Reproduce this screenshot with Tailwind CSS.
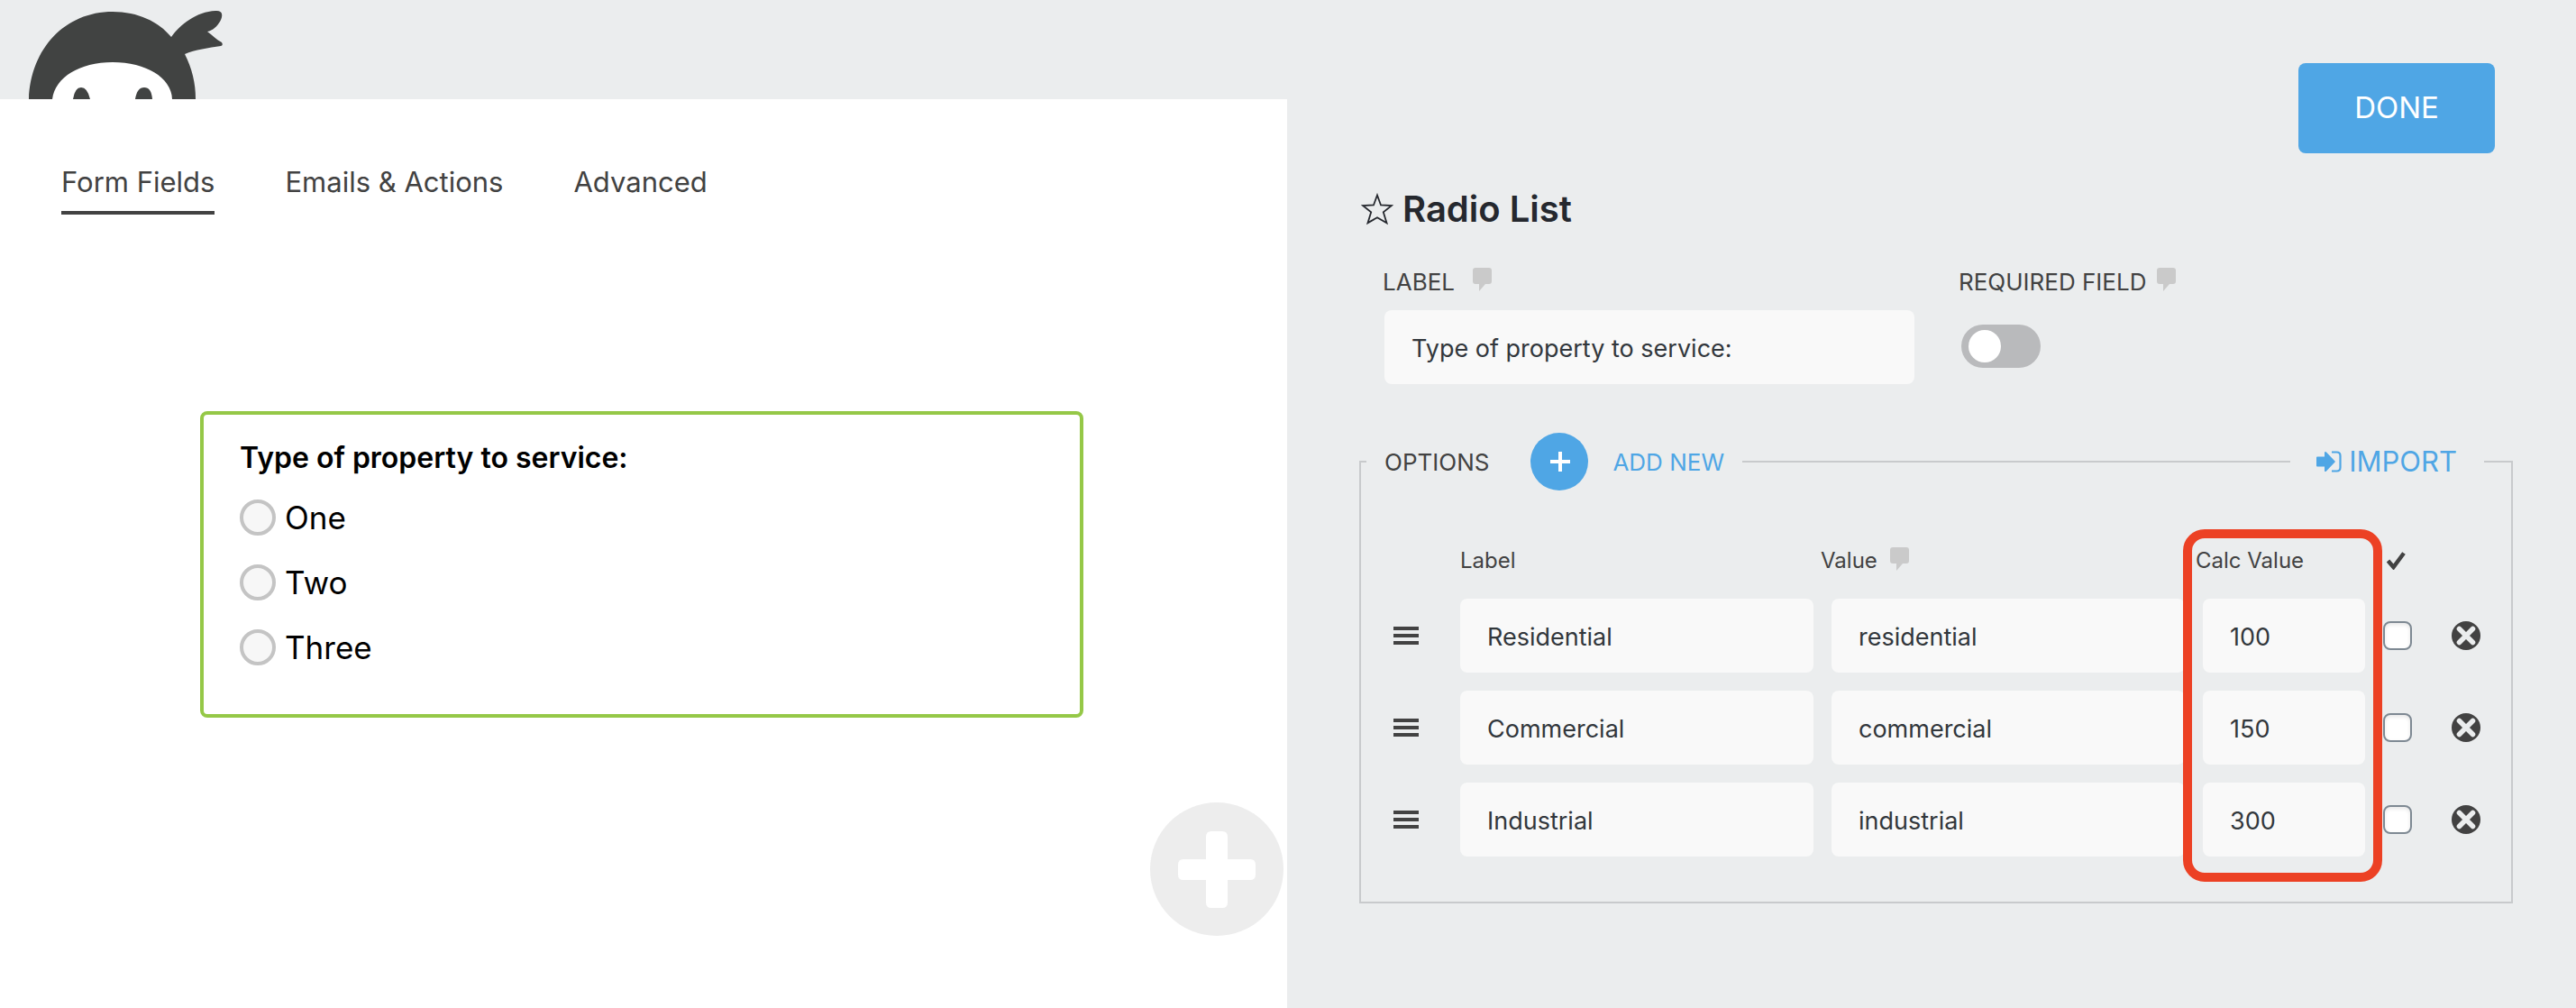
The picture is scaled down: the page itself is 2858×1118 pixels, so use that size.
<!DOCTYPE html>
<html lang="en">
<head>
<meta charset="utf-8">
<title>Form Builder</title>
<script src="https://cdn.jsdelivr.net/npm/@tailwindcss/browser@4"></script>
</head>
<body class="flex min-h-screen bg-[#ebedee] font-['Inter',sans-serif] text-[#424242]">
<svg class="hidden">
  <symbol id="note" viewBox="0 0 21 26"><path fill="#cacaca" d="M3 0h15a3 3 0 0 1 3 3v12a3 3 0 0 1-3 3h-4l-7 8v-8H3a3 3 0 0 1-3-3V3a3 3 0 0 1 3-3z"/></symbol>
  <symbol id="bars" viewBox="0 0 28 20"><path fill="#424242" d="M0 0h28v4H0zM0 8h28v4H0zM0 16h28v4H0z"/></symbol>
  <symbol id="remove" viewBox="0 0 32 32"><circle cx="16" cy="16" r="16" fill="#424242"/><path d="M8.500 8.500l15 15M23.500 8.500l-15 15" stroke="#ebedee" stroke-width="5.600" stroke-linecap="round"/></symbol>
</svg>

<main class="relative flex w-[calc(50%-1px)] flex-col">
  <header class="h-[110px] pl-8">
    <svg class="h-[110px] w-[216px]" viewBox="32 0 216 110" aria-label="Ninja Forms" role="img">
      <path fill="#414342" d="M32 110C34 54 72 13 125 13C153 13 176 24 190 41C200 27 218 13 239 12C247 11 248 17 244 24C241 29 236 34 230 35C236 39 240 44 246 47Q248 50 245 51C232 53 216 55 205 60C213 76 217 92 217 110Z"/>
      <path fill="#fff" d="M58 110C61 86 88 69 125 69S190 86 191 110Z"/>
      <path fill="#414342" d="M81 110Q83 97 90 97T100 110ZM150 110Q152 97 160 97T169 110Z"/>
    </svg>
  </header>
  <div class="flex-1 bg-white pt-[72px]">
    <nav class="flex gap-[78px] pl-[68px] text-[31px] leading-10">
      <a href="#fields" class="border-b-4 border-[#424242] pb-3">Form Fields</a>
      <a href="#emails">Emails &amp; Actions</a>
      <a href="#advanced">Advanced</a>
    </nav>
    <fieldset class="mr-[226px] ml-[222px] mt-[218px] rounded-lg border-4 border-[#95c847] px-10 pt-7 pb-[54px] text-[35px] leading-10 text-black">
      <div class="mb-[26px] text-[32px] font-semibold">Type of property to service:</div>
      <div class="flex flex-col gap-8">
        <label class="flex items-center gap-[10px]"><input type="radio" name="property" class="size-10 appearance-none rounded-full border-4 border-[#c4c4c4] bg-[#f7f7f7]">One</label>
        <label class="flex items-center gap-[10px]"><input type="radio" name="property" class="size-10 appearance-none rounded-full border-4 border-[#c4c4c4] bg-[#f7f7f7]">Two</label>
        <label class="flex items-center gap-[10px]"><input type="radio" name="property" class="size-10 appearance-none rounded-full border-4 border-[#c4c4c4] bg-[#f7f7f7]">Three</label>
      </div>
    </fieldset>
  </div>
  <button aria-label="Add new field" class="absolute right-1 bottom-20 size-[148px] rounded-full bg-[#ededed]">
    <svg viewBox="0 0 148 148"><path fill="#fff" d="M68 32h12q6 0 6 6v25h25q6 0 6 6v11q0 6-6 6H86v25q0 6-6 6H68q-6 0-6-6V86H37q-6 0-6-6V69q0-6 6-6h25V38q0-6 6-6z"/></svg>
  </button>
</main>

<aside class="flex flex-1 flex-col pt-[70px] pr-[70px] pl-20">
  <button class="mr-5 h-[100px] w-[218px] self-end rounded-lg bg-[#4fa6e5] text-[33px] text-white">DONE</button>
  <h2 class="mt-[37px] flex items-center gap-[10px] pl-[2px] text-[40px] leading-[50px] font-semibold text-[#25282e]">
    <svg class="size-9" viewBox="0 0 36 36" fill="none" stroke="#25282e" stroke-width="1.800"><path d="M18 2.500l4 11 12 .5-9.200 7.300 3.700 12L18 27.200l-10.500 6.100 3.700-12L2 14l12-.5z"/></svg>
    Radio List
  </h2>
  <div class="mt-[39px] flex">
    <div class="w-[639px]">
      <div class="flex h-8 items-center gap-5 pl-[26px] text-[26px]">
        <label for="label">LABEL</label><svg class="mb-1 h-[26px] w-[21px]"><use href="#note"/></svg>
      </div>
      <input id="label" value="Type of property to service:" class="mt-4 ml-7 h-[82px] w-[588px] rounded-lg bg-[#f9f9f9] px-[30px] pt-[2px] text-[27px] text-[#32373c]">
    </div>
    <div>
      <div class="flex h-8 items-center gap-3 pl-[26px] text-[26px]">
        <label for="required">REQUIRED FIELD</label><svg class="mb-1 h-[26px] w-[21px]"><use href="#note"/></svg>
      </div>
      <input id="required" type="checkbox" class="mt-8 ml-[29px] block h-12 w-[88px] appearance-none rounded-full bg-[#b9babc] pt-[6px] pl-2 before:block before:size-9 before:rounded-full before:bg-white">
    </div>
  </div>

  <div class="relative mt-[54px]">
    <fieldset class="border-2 border-[#c8cacc] pb-[30px]">
      <legend class="ml-[6px] flex items-center gap-[46px] px-5 text-[26px]">
        OPTIONS
        <button class="flex items-center gap-[27px] text-[#4fa6e5]">
          <span class="flex size-16 items-center justify-center rounded-full bg-[#4fa6e5]"><svg class="size-6" viewBox="0 0 24 24" stroke="#fff" stroke-width="4"><path d="M13 1v22M2 12h22"/></svg></span>
          ADD NEW
        </button>
      </legend>
      <div class="relative pt-9">
        <table class="w-full table-fixed text-left">
          <colgroup><col class="w-[110px]"><col><col><col class="w-[204px]"><col class="w-20"><col class="w-[66px]"></colgroup>
          <thead class="text-[24px]">
            <tr class="h-[84px]">
              <td></td>
              <th class="font-normal">Label</th>
              <th class="font-normal"><span class="-ml-2 flex items-center gap-[14px]">Value <svg class="mb-1 h-[26px] w-[21px]"><use href="#note"/></svg></span></th>
              <th class="font-normal whitespace-nowrap">Calc Value</th>
              <th class="pl-2" aria-label="Selected"><svg class="h-5 w-[21px]" viewBox="0 0 21 20"><path fill="none" stroke="#424242" stroke-width="4.500" d="M1.500 10l6 7L19 1.500"/></svg></th>
              <td></td>
            </tr>
          </thead>
          <tbody class="text-[27px] text-[#32373c]">
            <tr>
              <td class="pb-5 pl-9"><svg class="h-5 w-7" role="img" aria-label="Reorder"><use href="#bars"/></svg></td>
              <td class="pr-4 pb-5"><input aria-label="Label" value="Residential" class="block h-[82px] w-full rounded-lg bg-[#f9f9f9] px-[30px] pt-[2px]"></td>
              <td class="pr-3 pb-5 pl-1"><input aria-label="Value" value="residential" class="block h-[82px] w-full rounded-lg bg-[#f9f9f9] px-[30px] pt-[2px]"></td>
              <td class="pr-4 pb-5 pl-2"><input aria-label="Calc Value" value="100" class="block h-[82px] w-full rounded-lg bg-[#f9f9f9] px-[30px] pt-[2px]"></td>
              <td class="pb-5 pl-1"><input type="checkbox" aria-label="Selected" class="block size-8 appearance-none rounded-lg border-2 border-[#7e8993] bg-white shadow-[inset_0_2px_4px_rgba(0,0,0,0.1)]"></td>
              <td class="pb-5"><button aria-label="Remove" class="block size-8"><svg class="size-8"><use href="#remove"/></svg></button></td>
            </tr>
            <tr>
              <td class="pb-5 pl-9"><svg class="h-5 w-7" role="img" aria-label="Reorder"><use href="#bars"/></svg></td>
              <td class="pr-4 pb-5"><input aria-label="Label" value="Commercial" class="block h-[82px] w-full rounded-lg bg-[#f9f9f9] px-[30px] pt-[2px]"></td>
              <td class="pr-3 pb-5 pl-1"><input aria-label="Value" value="commercial" class="block h-[82px] w-full rounded-lg bg-[#f9f9f9] px-[30px] pt-[2px]"></td>
              <td class="pr-4 pb-5 pl-2"><input aria-label="Calc Value" value="150" class="block h-[82px] w-full rounded-lg bg-[#f9f9f9] px-[30px] pt-[2px]"></td>
              <td class="pb-5 pl-1"><input type="checkbox" aria-label="Selected" class="block size-8 appearance-none rounded-lg border-2 border-[#7e8993] bg-white shadow-[inset_0_2px_4px_rgba(0,0,0,0.1)]"></td>
              <td class="pb-5"><button aria-label="Remove" class="block size-8"><svg class="size-8"><use href="#remove"/></svg></button></td>
            </tr>
            <tr>
              <td class="pb-5 pl-9"><svg class="h-5 w-7" role="img" aria-label="Reorder"><use href="#bars"/></svg></td>
              <td class="pr-4 pb-5"><input aria-label="Label" value="Industrial" class="block h-[82px] w-full rounded-lg bg-[#f9f9f9] px-[30px] pt-[2px]"></td>
              <td class="pr-3 pb-5 pl-1"><input aria-label="Value" value="industrial" class="block h-[82px] w-full rounded-lg bg-[#f9f9f9] px-[30px] pt-[2px]"></td>
              <td class="pr-4 pb-5 pl-2"><input aria-label="Calc Value" value="300" class="block h-[82px] w-full rounded-lg bg-[#f9f9f9] px-[30px] pt-[2px]"></td>
              <td class="pb-5 pl-1"><input type="checkbox" aria-label="Selected" class="block size-8 appearance-none rounded-lg border-2 border-[#7e8993] bg-white shadow-[inset_0_2px_4px_rgba(0,0,0,0.1)]"></td>
              <td class="pb-5"><button aria-label="Remove" class="block size-8"><svg class="size-8"><use href="#remove"/></svg></button></td>
            </tr>
          </tbody>
        </table>
        <div class="pointer-events-none absolute top-[43px] right-[143px] h-[391px] w-[221px] rounded-3xl border-[10px] border-[#ec4124]"></div>
      </div>
    </fieldset>
    <button class="absolute top-0 right-8 flex h-16 items-center gap-2 bg-[#ebedee] pr-[30px] pl-[29px] text-[31px] text-[#4fa6e5]">
      <svg class="h-6 w-7" viewBox="0 0 28 24" fill="#4fa6e5"><path d="M1 6.500h8V1.500q1-1 2 0L21 12 11 22.500q-1 1-2 0V17.500H1q-1 0-1-1V7.500q0-1 1-1z"/><path fill="none" stroke="#4fa6e5" stroke-width="2.200" d="M17 1.500h5.500q4 0 4 4v13q0 4-4 4H17"/></svg>
      IMPORT
    </button>
  </div>
</aside>
</body>
</html>
